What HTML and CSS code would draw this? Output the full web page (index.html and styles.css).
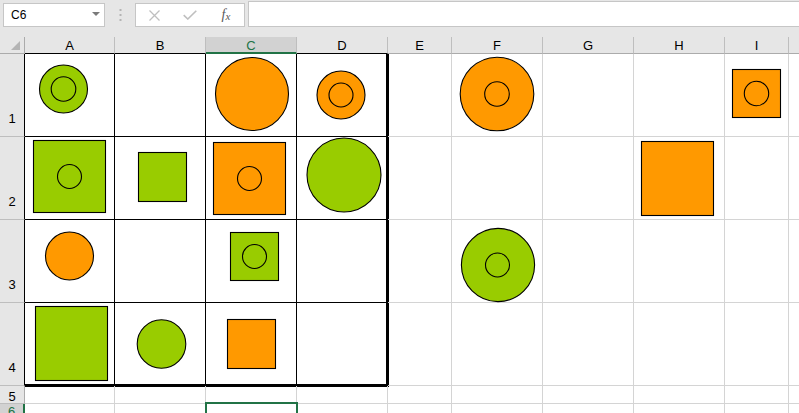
FILE: index.html
```html
<!DOCTYPE html>
<html>
<head>
<meta charset="utf-8">
<link rel="stylesheet" href="styles.css">
</head>
<body>
<div class="app">
  <div class="toolbar">
    <div class="namebox"><span>C6</span><svg class="dd" width="8" height="4" viewBox="0 0 8 4"><polygon points="0,0 8,0 4,4" fill="#7a7a7a"/></svg></div>
    <svg class="grip" width="3" height="14" viewBox="0 0 3 14"><rect x="0.5" y="1" width="2" height="2" fill="#b4b4b4"/><rect x="0.5" y="6" width="2" height="2" fill="#b4b4b4"/><rect x="0.5" y="11" width="2" height="2" fill="#b4b4b4"/></svg>
    <div class="fbtns">
      <span class="fb"><svg width="11" height="11" viewBox="0 0 11 11"><path d="M0.5 0.5 L10.5 10.5 M10.5 0.5 L0.5 10.5" stroke="#bfbfbf" stroke-width="1.3" fill="none"/></svg></span>
      <span class="fb"><svg width="14" height="10" viewBox="0 0 14 10"><path d="M0.7 5.2 L4.8 9 L13.3 0.7" stroke="#bfbfbf" stroke-width="1.6" fill="none"/></svg></span>
      <span class="fb fx">f<span class="fxx">x</span></span>
    </div>
    <div class="finput"></div>
  </div>
  <div class="sheet">
    <div class="corner"><svg width="9" height="9" viewBox="0 0 9 9"><polygon points="9,0 9,9 0,9" fill="#b4b4b4"/></svg></div>
    <div class="ch tb">A</div><div class="ch tb">B</div><div class="ch sel">C</div><div class="ch tb">D</div><div class="ch">E</div><div class="ch">F</div><div class="ch">G</div><div class="ch">H</div><div class="ch">I</div><div class="ch"></div>

    <div class="rh tb">1</div><div class="c t"></div><div class="c t"></div><div class="c t"></div><div class="c t r"></div><div class="c"></div><div class="c"></div><div class="c"></div><div class="c"></div><div class="c"></div><div class="c"></div>
    <div class="rh tb">2</div><div class="c t"></div><div class="c t"></div><div class="c t"></div><div class="c t r"></div><div class="c"></div><div class="c"></div><div class="c"></div><div class="c"></div><div class="c"></div><div class="c"></div>
    <div class="rh tb">3</div><div class="c t"></div><div class="c t"></div><div class="c t"></div><div class="c t r"></div><div class="c"></div><div class="c"></div><div class="c"></div><div class="c"></div><div class="c"></div><div class="c"></div>
    <div class="rh tb">4</div><div class="c t b"></div><div class="c t b"></div><div class="c t b"></div><div class="c t r b"></div><div class="c"></div><div class="c"></div><div class="c"></div><div class="c"></div><div class="c"></div><div class="c"></div>
    <div class="rh short">5</div><div class="c"></div><div class="c"></div><div class="c"></div><div class="c"></div><div class="c"></div><div class="c"></div><div class="c"></div><div class="c"></div><div class="c"></div><div class="c"></div>
    <div class="rh short sel">6</div><div class="c"></div><div class="c"></div><div class="c cur"></div><div class="c"></div><div class="c"></div><div class="c"></div><div class="c"></div><div class="c"></div><div class="c"></div><div class="c"></div>
  </div>
  <svg class="shapes" width="799" height="413" viewBox="0 0 799 413">
    <g stroke="#000" stroke-width="1.1">
      <!-- row 1 -->
      <circle cx="63.5" cy="89" r="24" fill="#99cc00"/>
      <circle cx="63.5" cy="89" r="12.3" fill="none"/>
      <circle cx="252" cy="94" r="36.5" fill="#ff9900"/>
      <circle cx="341" cy="95" r="24" fill="#ff9900"/>
      <circle cx="341" cy="95" r="12" fill="none"/>
      <circle cx="497" cy="94" r="36.8" fill="#ff9900"/>
      <circle cx="497" cy="94" r="12.3" fill="none"/>
      <rect x="732.5" y="69.5" width="48" height="48" fill="#ff9900"/>
      <circle cx="756.5" cy="93.5" r="12.2" fill="none"/>
      <!-- row 2 -->
      <rect x="33.5" y="140.5" width="72" height="72" fill="#99cc00"/>
      <circle cx="69.5" cy="176.5" r="12" fill="none"/>
      <rect x="138.5" y="152.5" width="48" height="49" fill="#99cc00"/>
      <rect x="213.5" y="142.5" width="72" height="72" fill="#ff9900"/>
      <circle cx="249.5" cy="178.5" r="12" fill="none"/>
      <circle cx="344" cy="175" r="37" fill="#99cc00"/>
      <rect x="641.5" y="141.5" width="72" height="74" fill="#ff9900"/>
      <!-- row 3 -->
      <circle cx="69.5" cy="256" r="24" fill="#ff9900"/>
      <rect x="230.5" y="232.5" width="48" height="48" fill="#99cc00"/>
      <circle cx="254.5" cy="256.5" r="12" fill="none"/>
      <circle cx="498" cy="265" r="36.6" fill="#99cc00"/>
      <circle cx="497.5" cy="265" r="12" fill="none"/>
      <!-- row 4 -->
      <rect x="35.5" y="306.5" width="72" height="74" fill="#99cc00"/>
      <circle cx="161.5" cy="344" r="24.3" fill="#99cc00"/>
      <rect x="227.5" y="319.5" width="48" height="49" fill="#ff9900"/>
    </g>
  </svg>
</div>
</body>
</html>
```

FILE: styles.css
```css
html, body {
  margin: 0;
  padding: 0;
}
body {
  font-family: "Liberation Sans", Arial, sans-serif;
  overflow: hidden;
}
.app {
  position: relative;
  width: 799px;
  height: 413px;
  overflow: hidden;
  background: #e6e6e6;
}
.toolbar {
  height: 37px;
  display: flex;
  align-items: flex-start;
}
.namebox {
  margin: 3px 0 0 3px;
  width: 102px;
  height: 24px;
  box-sizing: border-box;
  border: 1px solid #c6c6c6;
  background: #fff;
  display: flex;
  align-items: center;
  justify-content: space-between;
  padding: 0 4px 0 7px;
  font-size: 12px;
  color: #000;
}
.dd {
  display: block;
  margin-top: -3px;
}
.grip {
  display: block;
  margin: 8px 0 0 14px;
}
.fbtns {
  margin: 3px 0 0 13px;
  width: 110px;
  height: 24px;
  box-sizing: border-box;
  border: 1px solid #c6c6c6;
  background: #fff;
  display: flex;
  align-items: center;
}
.fb {
  flex: 1;
  display: flex;
  justify-content: center;
  align-items: center;
}
.fb svg {
  display: block;
}
.fx {
  font-family: "Liberation Serif", "Times New Roman", serif;
  font-style: italic;
  font-size: 14px;
  color: #595959;
  line-height: 14px;
}
.fxx {
  font-size: 11px;
  position: relative;
  top: 1px;
}
.finput {
  margin: 1px 0 0 3px;
  flex: 1;
  height: 26px;
  box-sizing: border-box;
  border: 1px solid #c6c6c6;
  border-right: none;
  background: #fff;
}
.sheet {
  display: grid;
  grid-template-columns: 25px 90px 91px 91px 91px 64px 91px 91px 91px 64px 11px;
  grid-template-rows: 17px 83px 83px 83px 83px 18px 10px;
  background: #fff;
}
.sheet > div {
  box-sizing: border-box;
}
.corner {
  background: #e6e6e6;
  border-right: 1px solid #ababab;
  border-bottom: 1px solid #ababab;
  display: flex;
  align-items: flex-end;
  justify-content: flex-end;
  padding: 0 4px 3px 0;
}
.corner svg {
  display: block;
}
.ch {
  background: #e6e6e6;
  border-bottom: 1px solid #ababab;
  border-right: 1px solid #bebebe;
  display: flex;
  align-items: center;
  justify-content: center;
  font-size: 13px;
  color: #000;
  line-height: 15px;
}
.ch.tb {
  border-bottom-color: #000;
}
.ch.sel {
  background: #d2d2d2;
  color: #217346;
  border-bottom: 2px solid #217346;
  padding-top: 1px;
}
.rh {
  background: #e6e6e6;
  border-right: 1px solid #ababab;
  border-bottom: 1px solid #bebebe;
  display: flex;
  align-items: flex-end;
  justify-content: center;
  padding-bottom: 10px;
  font-size: 13px;
  line-height: 15px;
  color: #000;
}
.rh.tb {
  border-right-color: #000;
}
.rh.short {
  align-items: center;
  padding-bottom: 0;
  padding-top: 3px;
}
.rh.sel {
  background: #d2d2d2;
  color: #217346;
  border-right: 2px solid #217346;
  padding-top: 5px;
}
.c {
  border-right: 1px solid #d4d4d4;
  border-bottom: 1px solid #d4d4d4;
}
.c.t {
  border-right-color: #000;
  border-bottom-color: #000;
}
.c.t.r {
  border-right: 2px solid #000;
  box-shadow: 1px 0 0 #000;
}
.c.t.b {
  border-bottom: 2px solid #000;
  box-shadow: 0 1px 0 #000;
}
.c.t.r.b {
  box-shadow: 1px 0 0 #000, 0 1px 0 #000, 1px 1px 0 #000;
}
.cur {
  position: relative;
}
.cur::after {
  content: "";
  position: absolute;
  top: -2px;
  left: -1px;
  right: -2px;
  bottom: -4px;
  border: 2px solid #217346;
}
.shapes {
  position: absolute;
  left: 0;
  top: 0;
  pointer-events: none;
}
```
